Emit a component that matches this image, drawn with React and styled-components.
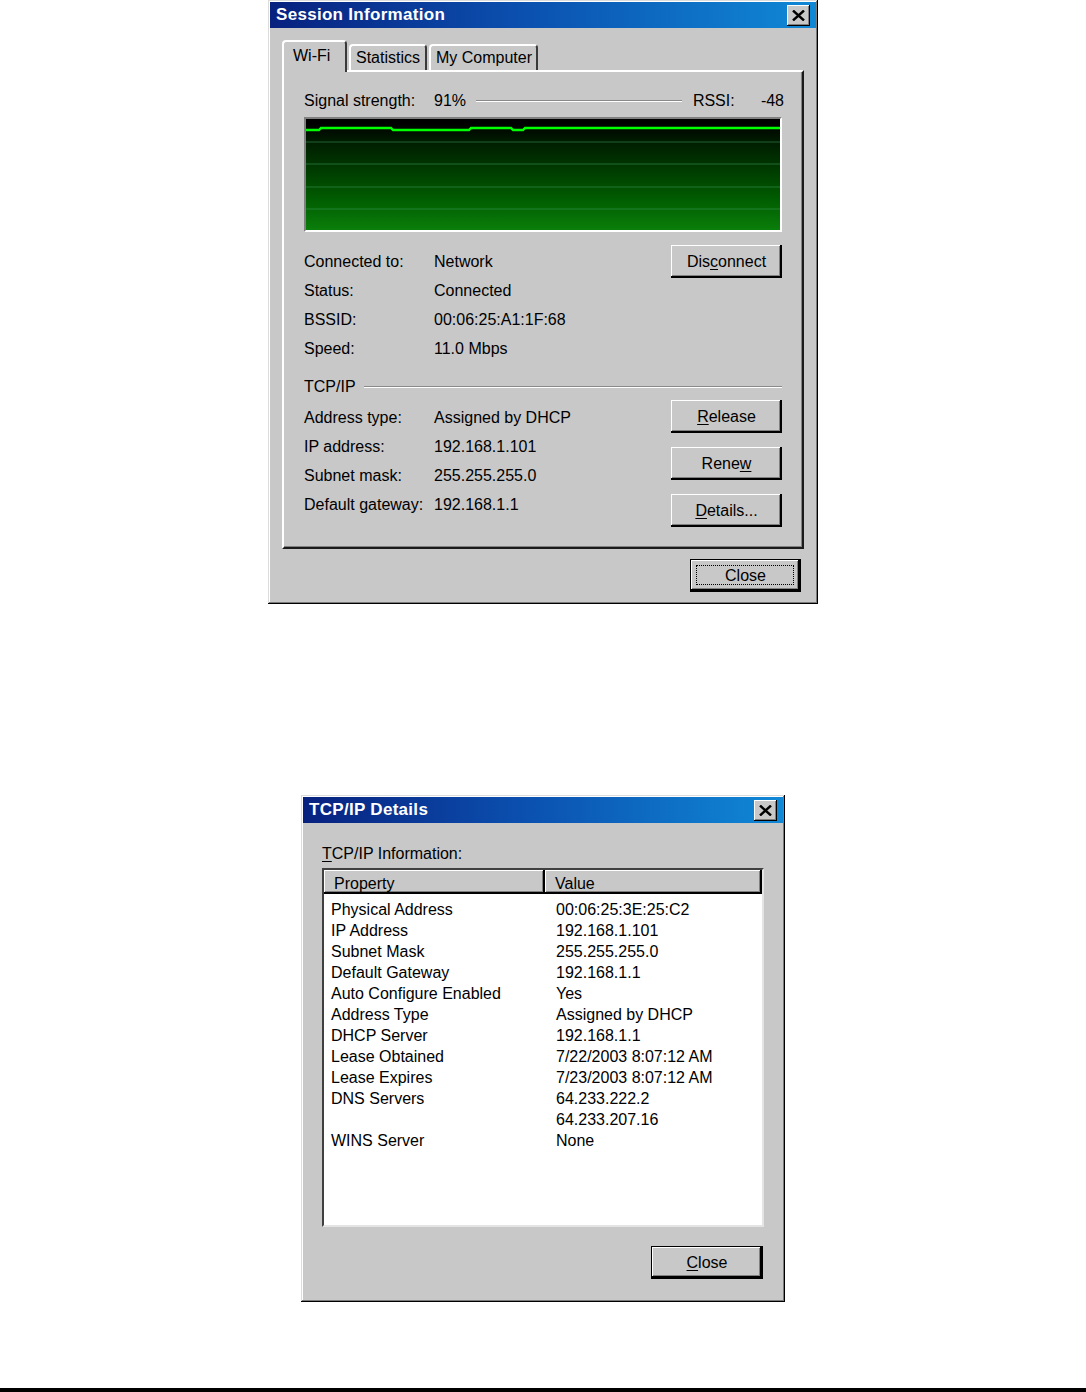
import React from 'react';
import styled, { createGlobalStyle } from 'styled-components';

const wifiRows = [
  ['Connected to:', 'Network'],
  ['Status:', 'Connected'],
  ['BSSID:', '00:06:25:A1:1F:68'],
  ['Speed:', '11.0 Mbps']
];

const tcpRows = [
  ['Address type:', 'Assigned by DHCP'],
  ['IP address:', '192.168.1.101'],
  ['Subnet mask:', '255.255.255.0'],
  ['Default gateway:', '192.168.1.1']
];

const detailRows = [
  ['Physical Address', '00:06:25:3E:25:C2'],
  ['IP Address', '192.168.1.101'],
  ['Subnet Mask', '255.255.255.0'],
  ['Default Gateway', '192.168.1.1'],
  ['Auto Configure Enabled', 'Yes'],
  ['Address Type', 'Assigned by DHCP'],
  ['DHCP Server', '192.168.1.1'],
  ['Lease Obtained', '7/22/2003 8:07:12 AM'],
  ['Lease Expires', '7/23/2003 8:07:12 AM'],
  ['DNS Servers', '64.233.222.2'],
  ['', '64.233.207.16'],
  ['WINS Server', 'None']
];

// signal trace, in graph coordinates (x, y)
const trace = [
  [0, 11], [13, 11], [15, 9], [85, 9], [87, 11], [163, 11], [165, 9],
  [205, 9], [207, 11], [217, 11], [219, 9], [474, 9]
];

function CloseBox() {
  return (
    <CloseBoxButton>
      <svg width="13" height="11" viewBox="0 0 13 11">
        <path d="M1 0.5 L12 10.5 M12 0.5 L1 10.5" stroke="#000" strokeWidth="2.4" fill="none" />
      </svg>
    </CloseBoxButton>
  );
}

function SignalGraph() {
  return (
    <Graph>
      <svg width="100%" height="100%" viewBox="0 0 474 111" preserveAspectRatio="none">
        {[23, 45, 68, 90].map((y) => (
          <line key={y} x1="0" x2="474" y1={y} y2={y} stroke="#3c9a5c" strokeOpacity="0.55" strokeWidth="1.2" />
        ))}
        <polyline
          points={trace.map((p) => p.join(',')).join(' ')}
          fill="none"
          stroke="#00ff00"
          strokeWidth="2.4"
        />
      </svg>
    </Graph>
  );
}

function SessionInformation() {
  return (
    <Window $w={550} $h={604}>
      <TitleBar>
        <TitleText>Session Information</TitleText>
        <CloseBox />
      </TitleBar>
      <TabArea>
        <TabStrip>
          <Tab $active $w={65}>Wi-Fi</Tab>
          <Tab $w={78}>Statistics</Tab>
          <Tab $w={109}>My Computer</Tab>
        </TabStrip>
        <Panel>
          <SignalRow>
            <Label>Signal strength:</Label>
            <span>91%</span>
            <Etched $l={10} $r={11} />
            <RssiLabel>RSSI:</RssiLabel>
            <span>-48</span>
          </SignalRow>
          <SignalGraph />

          <InfoSection $mt={14}>
            <Fields>
              {wifiRows.map(([k, v]) => (
                <React.Fragment key={k}>
                  <Label>{k}</Label>
                  <span>{v}</span>
                </React.Fragment>
              ))}
            </Fields>
            <ButtonColumn $mt={-1}>
              <Button>
                Dis<U>c</U>onnect
              </Button>
            </ButtonColumn>
          </InfoSection>

          <GroupHeading>
            <span>TCP/IP</span>
            <Etched $l={8} $r={0} />
          </GroupHeading>

          <InfoSection $mt={4}>
            <Fields>
              {tcpRows.map(([k, v]) => (
                <React.Fragment key={k}>
                  <Label>{k}</Label>
                  <span>{v}</span>
                </React.Fragment>
              ))}
            </Fields>
            <ButtonColumn $mt={-2}>
              <Button>
                <U>R</U>elease
              </Button>
              <Button>
                Rene<U>w</U>
              </Button>
              <Button>
                <U>D</U>etails...
              </Button>
            </ButtonColumn>
          </InfoSection>
        </Panel>
        <Footer $pt={10} $pr={3}>
          <Button $default $focus>
            Close
          </Button>
        </Footer>
      </TabArea>
    </Window>
  );
}

function TcpIpDetails() {
  return (
    <Window $w={484} $h={507} $top={191}>
      <TitleBar>
        <TitleText>TCP/IP Details</TitleText>
        <CloseBox />
      </TitleBar>
      <DetailsBody>
        <ListCaption>
          <U>T</U>CP/IP Information:
        </ListCaption>
        <ListView>
          <ListHeader>
            <HeaderCell>Property</HeaderCell>
            <HeaderCell>Value</HeaderCell>
          </ListHeader>
          <ListRows>
            {detailRows.map(([k, v], i) => (
              <ListRow key={i}>
                <PropCell>{k}</PropCell>
                <ValueCell>{v}</ValueCell>
              </ListRow>
            ))}
          </ListRows>
        </ListView>
        <Footer $pt={19} $pr={1}>
          <Button $default $w={112}>
            <U>C</U>lose
          </Button>
        </Footer>
      </DetailsBody>
    </Window>
  );
}

export default function App() {
  return (
    <>
      <GlobalStyle />
      <Page>
        <SessionInformation />
        <TcpIpDetails />
        <BottomRule />
      </Page>
    </>
  );
}

const GlobalStyle = createGlobalStyle`
  html, body {
    margin: 0;
    padding: 0;
    background: #ffffff;
  }
  body {
    font-family: "Liberation Sans", Arial, sans-serif;
    font-size: 16px;
    color: #000000;
  }
`;

const Page = styled.div`
  display: flex;
  flex-direction: column;
  align-items: center;
  height: 1392px;
  box-sizing: border-box;
`;

const BottomRule = styled.div`
  align-self: stretch;
  margin-top: auto;
  height: 4px;
  background: #000000;
`;

const Window = styled.div`
  display: flex;
  flex-direction: column;
  box-sizing: border-box;
  width: ${(p) => p.$w}px;
  height: ${(p) => p.$h}px;
  margin-top: ${(p) => p.$top || 0}px;
  padding: 2px;
  background: #c8c8c8;
  box-shadow: inset -1px -1px 0 #000000, inset 1px 1px 0 #dcdcdc, inset -2px -2px 0 #7a7a7a,
    inset 2px 2px 0 #ffffff;
`;

const TitleBar = styled.div`
  display: flex;
  align-items: center;
  justify-content: space-between;
  height: 26px;
  padding: 0 6px;
  background: linear-gradient(90deg, #08217f 0%, #0b4fae 45%, #1088d6 100%);
`;

const TitleText = styled.span`
  color: #ffffff;
  font-weight: bold;
  font-size: 17px;
  letter-spacing: 0.3px;
`;

const CloseBoxButton = styled.div`
  display: flex;
  align-items: center;
  justify-content: center;
  box-sizing: border-box;
  width: 23px;
  height: 21px;
  background: #c8c8c8;
  box-shadow: inset -1px -1px 0 #000000, inset 1px 1px 0 #ffffff, inset -2px -2px 0 #808080;
`;

const TabArea = styled.div`
  display: flex;
  flex-direction: column;
  padding: 12px 12px 0;
`;

const TabStrip = styled.div`
  position: relative;
  z-index: 1;
  display: flex;
  align-items: flex-end;
  height: 30px;
`;

const Tab = styled.div`
  box-sizing: border-box;
  width: ${(p) => p.$w}px;
  height: ${(p) => (p.$active ? 32 : 26)}px;
  margin-bottom: ${(p) => (p.$active ? -2 : 0)}px;
  margin-left: ${(p) => (p.$active ? 0 : 2)}px;
  padding: ${(p) => (p.$active ? '4px 0 0 9px' : '2px 0 0 5px')};
  line-height: 20px;
  white-space: nowrap;
  background: #c8c8c8;
  border-top: 2px solid #ffffff;
  border-left: 2px solid #ffffff;
  border-right: 2px solid #3a3a3a;
  border-radius: 4px 4px 0 0;
`;

const Panel = styled.div`
  box-sizing: border-box;
  height: 479px;
  padding: 16px 20px 0;
  border-top: 2px solid #ffffff;
  border-left: 2px solid #ffffff;
  border-right: 2px solid #1a1a1a;
  border-bottom: 2px solid #1a1a1a;
  box-shadow: inset -1px -1px 0 #808080;
`;

const SignalRow = styled.div`
  display: flex;
  align-items: center;
  height: 22px;
  padding-top: 2px;
  margin-bottom: -2px;
  margin-right: -2px;
`;

const Label = styled.span`
  width: 130px;
  flex: none;
  white-space: nowrap;
`;

const RssiLabel = styled.span`
  width: 68px;
`;

const Etched = styled.div`
  flex: 1;
  height: 0;
  margin: 0 ${(p) => p.$r}px 0 ${(p) => p.$l}px;
  border-top: 1px solid #8a8a8a;
  border-bottom: 1px solid #ffffff;
`;

const Graph = styled.div`
  box-sizing: border-box;
  margin-top: 7px;
  height: 115px;
  border-top: 2px solid #808080;
  border-left: 2px solid #808080;
  border-right: 2px solid #ffffff;
  border-bottom: 2px solid #ffffff;
  background: linear-gradient(
    180deg,
    #000000 0%,
    #000000 4%,
    #001c00 20%,
    #003a00 45%,
    #005a00 70%,
    #0a7e0a 100%
  );

  svg {
    display: block;
  }
`;

const InfoSection = styled.div`
  display: flex;
  justify-content: space-between;
  align-items: flex-start;
  margin-top: ${(p) => p.$mt}px;
`;

const Fields = styled.div`
  display: grid;
  grid-template-columns: 130px auto;
  grid-auto-rows: 29px;
  align-items: center;
  padding-top: 1px;
  margin-bottom: -1px;
  white-space: nowrap;
`;

const ButtonColumn = styled.div`
  display: flex;
  flex-direction: column;
  gap: 14px;
  margin-top: ${(p) => p.$mt}px;
`;

const GroupHeading = styled.div`
  display: flex;
  align-items: center;
  height: 24px;
  margin-top: 12px;
  padding-top: 1px;
  box-sizing: border-box;
`;

const Button = styled.button`
  position: relative;
  box-sizing: border-box;
  width: ${(p) => p.$w || 111}px;
  height: 33px;
  padding: 0;
  font-family: "Liberation Sans", Arial, sans-serif;
  font-size: 16px;
  color: #000000;
  background: #c8c8c8;
  border: ${(p) => (p.$default ? '1px solid #000000' : 'none')};
  box-shadow: inset -2px -2px 0 #000000, inset 1px 1px 0 #ffffff, inset -3px -3px 0 #808080;

  &::after {
    content: '';
    display: ${(p) => (p.$focus ? 'block' : 'none')};
    position: absolute;
    inset: 5px 6px 6px 5px;
    border: 1px dotted #000000;
  }
`;

const U = styled.span`
  text-decoration: underline;
  text-underline-offset: 2px;
`;

const Footer = styled.div`
  display: flex;
  justify-content: flex-end;
  padding-top: ${(p) => p.$pt}px;
  padding-right: ${(p) => p.$pr}px;
`;

const DetailsBody = styled.div`
  display: flex;
  flex-direction: column;
  padding: 21px 19px 0;
`;

const ListCaption = styled.div`
  height: 20px;
  line-height: 20px;
`;

const ListView = styled.div`
  box-sizing: border-box;
  margin-top: 4px;
  height: 359px;
  background: #ffffff;
  border-top: 2px solid #404040;
  border-left: 2px solid #404040;
  border-right: 2px solid #e4e4e4;
  border-bottom: 2px solid #e4e4e4;
`;

const ListHeader = styled.div`
  display: grid;
  grid-template-columns: 221px 1fr;
  height: 24px;
`;

const HeaderCell = styled.div`
  box-sizing: border-box;
  padding: 3px 0 0 10px;
  line-height: 21px;
  background: #c8c8c8;
  box-shadow: inset -2px -2px 0 #000000, inset 1px 1px 0 #ffffff, inset -3px -3px 0 #808080;
`;

const ListRows = styled.div`
  padding-top: 5px;
`;

const ListRow = styled.div`
  display: grid;
  grid-template-columns: 221px 1fr;
  height: 21px;
  line-height: 21px;
  white-space: nowrap;
`;

const PropCell = styled.span`
  padding-left: 7px;
`;

const ValueCell = styled.span`
  padding-left: 11px;
`;
